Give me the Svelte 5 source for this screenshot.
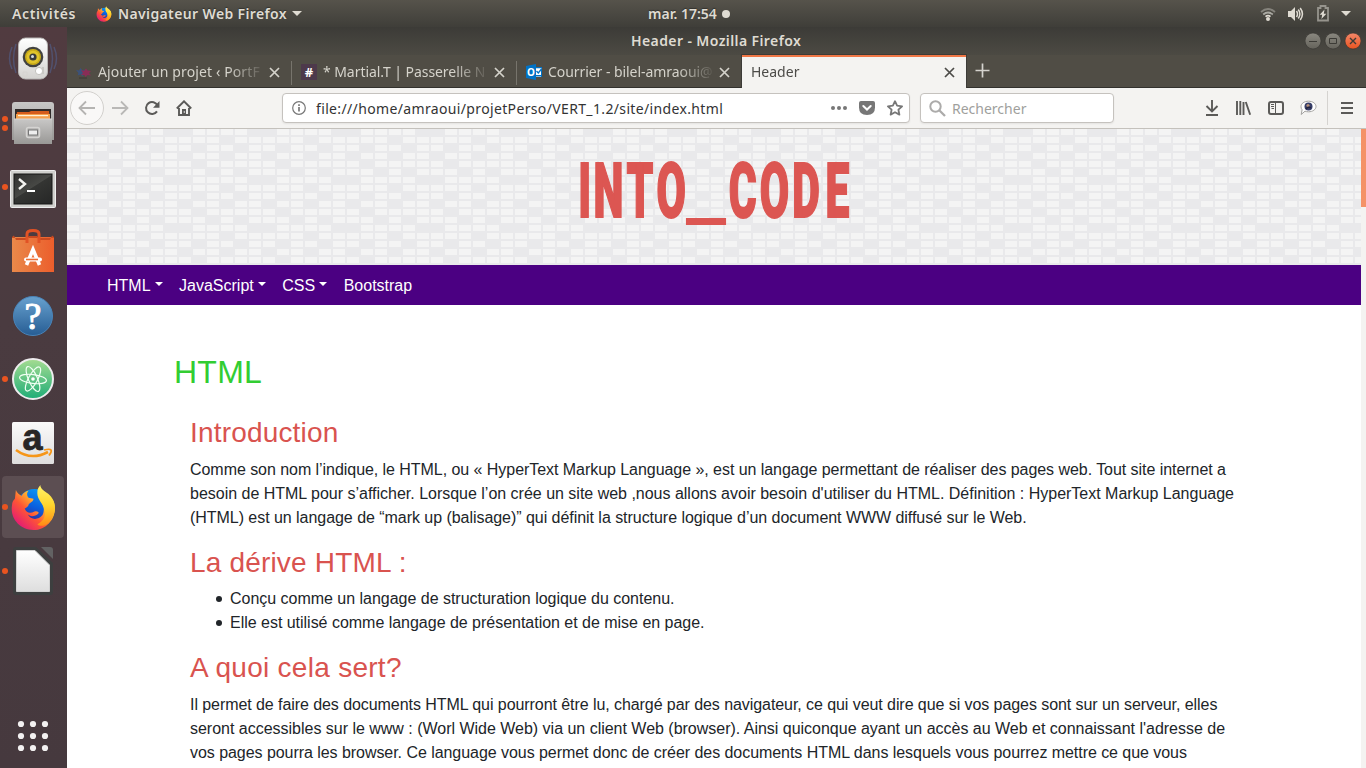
<script>
  const cols = [
    [0, 3, 4, 5],
    [0, 1, 2, 3, 4],
    [1, 2, 4, 5],
    [0, 1, 3, 4],
    [0, 1, 2, 4, 5],
    [1, 2, 3, 5]
  ];
  const bricks = cols.flatMap((row, r) => row.map((c) => ({ x: c * 14, y: r * 8 })));
  const dock = [
    { id: 'music', dots: 0 },
    { id: 'files', dots: 2 },
    { id: 'terminal', dots: 1 },
    { id: 'store', dots: 0 },
    { id: 'help', dots: 0 },
    { id: 'atom', dots: 1 },
    { id: 'amazon', dots: 0 },
    { id: 'firefox', dots: 1, active: true },
    { id: 'office', dots: 1 }
  ];
  const grid = [6, 18, 30];
  const intro = [
    { t: 'Comme son nom l’indique, le HTML, ou « HyperText Markup Language », est un langage permettant de réaliser des pages web. Tout site internet a', ls: -0.05 },
    { t: "besoin de HTML pour s’afficher. Lorsque l’on crée un site web ,nous allons avoir besoin d'utiliser du HTML. Définition : HyperText Markup Language", ls: -0.01 },
    { t: '(HTML) est un langage de “mark up (balisage)” qui définit la structure logique d’un document WWW diffusé sur le Web.', ls: -0.043 }
  ];
  const usage = [
    { t: 'Il permet de faire des documents HTML qui pourront être lu, chargé par des navigateur, ce qui veut dire que si vos pages sont sur un serveur, elles', ls: -0.068 },
    { t: "seront accessibles sur le www : (Worl Wide Web) via un client Web (browser). Ainsi quiconque ayant un accès au Web et connaissant l'adresse de", ls: -0.014 },
    { t: 'vos pages pourra les browser. Ce language vous permet donc de créer des documents HTML dans lesquels vous pourrez mettre ce que vous', ls: -0.05 }
  ];
</script>

{#snippet fox(size)}
  <svg width={size} height={size} viewBox="0 0 46 48">
    <defs>
      <linearGradient id="foxBody" x1="0.9" y1="0.1" x2="0.1" y2="0.9">
        <stop offset="0" stop-color="#fff44f" /><stop offset="0.3" stop-color="#ffbd2e" />
        <stop offset="0.6" stop-color="#ff5634" /><stop offset="1" stop-color="#e0147c" />
      </linearGradient>
      <linearGradient id="foxTail" x1="0.5" y1="0" x2="0.5" y2="1">
        <stop offset="0" stop-color="#fff36a" /><stop offset="0.5" stop-color="#ffd52c" /><stop offset="1" stop-color="#ff8a16" />
      </linearGradient>
      <linearGradient id="foxGlobe" x1="0.7" y1="0" x2="0.3" y2="1">
        <stop offset="0" stop-color="#0a9bf5" /><stop offset="0.5" stop-color="#0a60df" /><stop offset="1" stop-color="#3b1d83" />
      </linearGradient>
    </defs>
    <circle cx="24" cy="23" r="18" fill="url(#foxGlobe)" />
    <path d="M5 6 C6 9 9 11 11 12 C13 8 17 7 18 7 C16 9 16 12 18 14 L23 15 C23 18 19 19 18 21 C18 23 16 24 14 25 C16 30 20 30 24 28 C27 27 29 29 28 30 C25 33 20 34 17 31 C20 37 28 37 32 32 C35 27 33 20 31 14 C36 17 41 11 44 19 C48 32 38 47 23 47 C9 47 -1 35 1 22 C1 18 3 16 4 15 Z" fill="url(#foxBody)" />
    <path d="M30 1 C30 5 34 7 38 10 C47 17 47 31 39 39 C34 44 29 43 27 41 C34 38 36 31 34 26 C33 20 26 15 27 8 C27 4 29 3 30 1Z" fill="url(#foxTail)" />
  </svg>
{/snippet}

{#snippet cross()}
  <svg class="cross" width="11" height="11" viewBox="0 0 11 11"><path d="M1 1L10 10M10 1L1 10" fill="none" stroke="currentColor" stroke-width="1.7" /></svg>
{/snippet}

{#snippet caret()}
  <svg class="caret" width="8" height="4" viewBox="0 0 8 4"><path d="M0 0h8L4 4z" fill="#fff" /></svg>
{/snippet}

<div class="screen">
  <header class="topbar">
    <span class="activities">Activités</span>
    <span class="foxmini">{@render fox(16)}</span>
    <span class="appname">Navigateur Web Firefox</span>
    <i class="down"></i>
    <span class="clock">mar. 17:54<i></i></span>
    <div class="status">
      <svg width="16" height="16" viewBox="0 0 16 16"><g fill="none" stroke-width="1.8"><path d="M1 6Q8 0 15 6" stroke="#85837c" /><path d="M3.2 8.5Q8 4.5 12.8 8.5" stroke="#aaa9a2" /><path d="M5.5 10.6Q8 8.7 10.5 10.6" stroke="#dfdbd2" /></g><circle cx="8" cy="13" r="2" fill="#dfdbd2" /></svg>
      <svg class="vol" width="17" height="16" viewBox="0 0 17 16"><path d="M1 5h3l4-4v14l-4-4H1z" fill="#dfdbd2" /><g fill="none" stroke="#dfdbd2" stroke-width="1.5"><path d="M9.5 5q2 3 0 6M11.3 3.5q3.2 4.5 0 9M13.2 2q4.500 6 0 12" /></g></svg>
      <svg width="12" height="17" viewBox="0 0 12 17"><path d="M1 3h2.5V1h5v2H11v12.5H1z" fill="none" stroke="#96948d" stroke-width="1.8" /><path d="M7.5 4.5L2.7 9.7h2.5L4.4 14l5-5.3H6.800z" fill="#dfdbd2" /></svg>
      <i class="down"></i>
    </div>
  </header>

  <div class="desktop">
    <aside>
      {#each dock as app}
        <div class="app" class:active={app.active}>
          <div class="dots">{#each Array(app.dots) as _}<i></i>{/each}</div>
          {#if app.id === 'music'}
            <svg width="50" height="48" viewBox="0 0 50 48">
              <defs><linearGradient id="spk" x2="0" y2="1"><stop stop-color="#fff" /><stop offset="1" stop-color="#d4d3d0" /></linearGradient></defs>
              <g fill="none" stroke="#52618d" stroke-width="1.5" opacity=".6"><path d="M8 9Q3 24 8 38M4 12Q-1 24 4 34M42 9Q47 24 42 38M46 12Q51 24 46 34" /></g>
              <rect x="10.500" y="3" width="29" height="41" rx="7" fill="url(#spk)" stroke="#b7b5b3" />
              <circle cx="25" cy="22" r="10.3" fill="#42423f" /><circle cx="25" cy="22" r="8" fill="#cbad19" /><circle cx="25" cy="22" r="6.3" fill="#e1c42c" /><circle cx="25" cy="22" r="3.6" fill="#39393b" /><circle cx="24.5" cy="21.5" r="1.5" fill="#d5dce2" />
              <circle cx="31" cy="36" r="3.6" fill="#fff" stroke="#c4c3bf" /><rect x="34" y="32" width="2" height="7" fill="#c9c8c4" /><path d="M15 37h4v4h-4z" fill="none" stroke="#d6d4d0" />
            </svg>
          {:else if app.id === 'files'}
            <svg width="44" height="44" viewBox="0 0 44 44">
              <defs><linearGradient id="cab" x2="0" y2="1"><stop stop-color="#c8c7c6" /><stop offset="1" stop-color="#999896" /></linearGradient></defs>
              <path d="M1 4q0-3 3-3h36q3 0 3 3v35H1z" fill="url(#cab)" /><path d="M4 8h36v12H4z" fill="#302b2a" />
              <path d="M6 11h12l2-1h18l1 9H5z" fill="#d55c1c" /><path d="M5 13h34v5H5z" fill="#f5a04c" /><path d="M7 14h30v1.2H7z" fill="#fff0d5" />
              <path d="M3 18h38v25H3z" fill="url(#cab)" /><path d="M3 18h38" stroke="#dad8d7" /><rect x="15.5" y="26.500" width="13" height="10" rx="2" fill="#b3b2b0" stroke="#d5d4d2" stroke-width="1.5" /><rect x="17.5" y="29" width="9" height="5" fill="#eee" stroke="#777" />
            </svg>
          {:else if app.id === 'terminal'}
            <svg class="term" width="46" height="39" viewBox="0 0 46 39">
              <defs><linearGradient id="trm" x2=".8" y2="1"><stop stop-color="#30302f" /><stop offset=".5" stop-color="#474845" /><stop offset=".52" stop-color="#343533" /><stop offset="1" stop-color="#282928" /></linearGradient></defs>
              <rect x=".5" y=".5" width="45" height="37" rx="1" fill="#d0d0cd" stroke="#eee" /><rect x="4" y="4" width="38" height="30" fill="url(#trm)" stroke="#161716" /><path d="M9 9l6 5-6 5" fill="none" stroke="#f4f4f1" stroke-width="2.4" /><path d="M17 21h8" stroke="#fff" stroke-width="2" />
            </svg>
          {:else if app.id === 'store'}
            <svg width="44" height="44" viewBox="0 0 44 44">
              <defs><linearGradient id="bag"><stop stop-color="#e9894a" /><stop offset="1" stop-color="#ec5e2c" /></linearGradient></defs>
              <path d="M1 8h42v35H1z" fill="url(#bag)" /><path d="M1 8l2-1.500 2 4.500h11l2-4h8l2 4h11l2-4.500L43 8v1H1z" fill="#c94a20" /><path d="M16 14V5q0-3.500 6-3.500T28 5v9" fill="none" stroke="#e15225" stroke-width="3" /><path d="M15.500 36L22 20.500 28.500 36" fill="none" stroke="#fff" stroke-width="3.600" /><rect x="13" y="28.500" width="18" height="4" rx="2" fill="#fff" /><path d="M15 30.500h12" stroke="#ed6e35" stroke-width="1.600" />
            </svg>
          {:else if app.id === 'help'}
            <svg class="help" width="42" height="42" viewBox="0 0 42 42"><defs><linearGradient id="hlp" x2="0" y2="1"><stop stop-color="#67a1cf" /><stop offset="1" stop-color="#275d94" /></linearGradient></defs><circle cx="21" cy="21" r="19.5" fill="url(#hlp)" stroke="#4984b9" /><text x="21" y="33.500" text-anchor="middle" font-family="Liberation Serif, serif" font-size="38" fill="#fff" stroke="#fff" stroke-width="1">?</text></svg>
          {:else if app.id === 'atom'}
            <svg width="44" height="44" viewBox="0 0 44 44"><defs><linearGradient id="atm" x2="0" y2="1"><stop stop-color="#a5dc91" /><stop offset="1" stop-color="#1fad77" /></linearGradient></defs><circle cx="22" cy="22" r="20" fill="url(#atm)" stroke="#eeecee" stroke-width="2" /><g fill="none" stroke="#f0fff3" stroke-width="1.2"><ellipse cx="22" cy="22" rx="13.5" ry="4.500" transform="rotate(7 22 22)" /><ellipse cx="22" cy="22" rx="13.500" ry="4.500" transform="rotate(66 22 22)" /><ellipse cx="22" cy="22" rx="13.500" ry="4.500" transform="rotate(119 22 22)" /></g><circle cx="22" cy="22" r="1.800" fill="#fff" /></svg>
          {:else if app.id === 'amazon'}
            <svg width="42" height="42" viewBox="0 0 42 42"><defs><linearGradient id="amz" x2="0" y2="1"><stop stop-color="#fafafa" /><stop offset="1" stop-color="#dedddd" /></linearGradient></defs><rect width="42" height="42" rx="1.5" fill="url(#amz)" /><text x="20.500" y="27.500" text-anchor="middle" font-family="Liberation Sans, sans-serif" font-weight="bold" font-size="36" fill="#282626" stroke="#282626" stroke-width=".8">a</text><path d="M4 28q15 11 32 2" fill="none" stroke="#f69618" stroke-width="2.6" /><path d="M32 28q6-1.500 7 0t-2 5.500" fill="none" stroke="#f69618" stroke-width="1.800" /></svg>
          {:else if app.id === 'firefox'}
            {@render fox(47)}
          {:else}
            <svg width="40" height="48" viewBox="0 0 40 48"><defs><linearGradient id="doc" x2="0" y2="1"><stop stop-color="#fff" /><stop offset="1" stop-color="#dedede" /></linearGradient></defs><path d="M3 0h20l17 16v29q0 3-3 3H3q-3 0-3-3V3q0-3 3-3z" fill="#3d3f3f" /><path d="M3.500 3.500h18.500L36.500 18v26.500h-33z" fill="url(#doc)" stroke="#d2d2d2" /><path d="M28 0h9q3 0 3 3v9z" fill="#626263" /></svg>
          {/if}
        </div>
      {/each}
      <svg class="launcher" width="36" height="36" viewBox="0 0 36 36">
        {#each grid as y}{#each grid as x}<circle cx={x} cy={y} r="3.1" fill="#f3f1f1" />{/each}{/each}
      </svg>
    </aside>

    <main>
      <div class="titlebar">
        <span>Header - Mozilla Firefox</span>
        <div class="winbtns">
          <svg width="56" height="18" viewBox="0 0 56 18">
            <defs><linearGradient id="wb" x2="0" y2="1"><stop stop-color="#8a8880" /><stop offset="1" stop-color="#65635b" /></linearGradient><linearGradient id="wc" x2="0" y2="1"><stop stop-color="#f4886a" /><stop offset="1" stop-color="#e95420" /></linearGradient></defs>
            <circle cx="8" cy="9" r="8" fill="url(#wb)" stroke="#34332f" stroke-width=".6" /><circle cx="28" cy="9" r="8" fill="url(#wb)" stroke="#34332f" stroke-width=".6" /><circle cx="48" cy="9" r="8" fill="url(#wc)" stroke="#34332f" stroke-width=".6" />
            <g fill="none" stroke="#3c3b36"><path d="M4 9.500h8M24.500 6.500h7v5h-7z" /><path d="M45 6l6 6M51 6l-6 6" stroke-width="1.400" /></g>
          </svg>
        </div>
      </div>

      <div class="tabs">
        <div class="tab">
          <svg width="16" height="16" viewBox="0 0 16 16"><path d="M0 6l3 .5L4.500 4l2 2.500 3-1-1 3 3 1-4 1-1 2-2-2-3 1 1-2.500z" fill="#3b527b" /><path d="M5 6l3 1 2-2.500 1.500 2 3.500.5-2 2 2 2.500-3.500-.5-2 2-1-2-3.500 0 2-2z" fill="#892d56" /><path d="M3 14h8" stroke="#3b3934" /></svg>
          <span class="label one">Ajouter un projet ‹ PortF</span>{@render cross()}
        </div>
        <div class="tab">
          <svg width="16" height="16" viewBox="0 0 16 16"><rect width="16" height="16" fill="#4d394b" /><text x="8" y="13" text-anchor="middle" font-family="Noto Sans, sans-serif" font-weight="bold" font-size="13" fill="#fff">#</text></svg>
          <span class="label two">* Martial.T | Passerelle N</span>{@render cross()}
        </div>
        <div class="tab last">
          <svg width="16" height="16" viewBox="0 0 16 16"><path d="M7 3h9v10H7z" fill="#fff" /><path d="M9 12.500h7V11H9zM15 4v9h1V4zM9 3h7v1.200H9z" fill="#0072c6" /><path d="M10.500 7l1.800 2 3.200-4" fill="none" stroke="#0072c6" stroke-width="1.300" /><path d="M0 2l10-2v16L0 14z" fill="#0072c6" /><text x="5" y="12" text-anchor="middle" font-family="Noto Sans, sans-serif" font-weight="bold" font-size="10" fill="#fff">O</text></svg>
          <span class="label three">Courrier - bilel-amraoui@</span>{@render cross()}
        </div>
        <div class="tab current"><span class="label four">Header</span>{@render cross()}</div>
        <svg class="plus" width="15" height="15" viewBox="0 0 15 15"><path d="M7.500 .5v14M.5 7.500h14" stroke="#d5d3ce" stroke-width="1.700" /></svg>
      </div>

      <div class="toolbar">
        <div class="back"><svg width="18" height="16" viewBox="0 0 18 16"><path d="M17 8H2M8 1.500L1.500 8 8 14.500" fill="none" stroke="#b5b4b2" stroke-width="1.800" /></svg></div>
        <svg class="fwd" width="18" height="16" viewBox="0 0 18 16"><path d="M1 8h15M10 1.500L16.500 8 10 14.500" fill="none" stroke="#b9b8b6" stroke-width="1.800" /></svg>
        <svg class="reload" width="16" height="16" viewBox="0 0 16 16"><path d="M13 11.400A6 6 0 1 1 13.500 5.500" fill="none" stroke="#5b5a58" stroke-width="2" /><path d="M15.500 1v6.700H9z" fill="#5b5a58" /></svg>
        <svg class="home" width="16" height="16" viewBox="0 0 16 16"><path d="M.8 8.500L8 1.300l7.200 7.200M3 8v7h10V8" fill="none" stroke="#5b5a58" stroke-width="1.900" /><path d="M6 15V9h4v6z" fill="#5b5a58" /><circle cx="8.300" cy="12" r=".7" fill="#fff" /></svg>
        <div class="urlbar">
          <svg width="14" height="14" viewBox="0 0 14 14"><circle cx="7" cy="7" r="6.300" fill="none" stroke="#777" stroke-width="1.200" /><path d="M7 6v4.500M7 3.200v1.700" stroke="#777" stroke-width="1.700" /></svg>
          <span class="url">file:///home/amraoui/projetPerso/VERT_1.2/site/index.html</span>
          <svg class="urlicons" width="74" height="18" viewBox="0 0 74 18"><g fill="#777"><circle cx="3" cy="9" r="2" /><circle cx="9" cy="9" r="2" /><circle cx="15" cy="9" r="2" /><path d="M31 2h12q2 0 2 2v4.500q0 7.500-8 7.500t-8-7.500V4q0-2 2-2z" /></g><path d="M33.300 7l3.700 3.500L40.700 7" fill="none" stroke="#fff" stroke-width="2" stroke-linecap="round" /><path d="M65 2.200l2.100 4.500 5 .6-3.700 3.400 1 4.900-4.400-2.400-4.400 2.400 1-4.900-3.700-3.400 5-.6z" fill="none" stroke="#777" stroke-width="1.800" stroke-linejoin="round" /></svg>
        </div>
        <div class="search">
          <svg width="17" height="17" viewBox="0 0 17 17"><circle cx="6.500" cy="6.500" r="5.200" fill="none" stroke="#acabaa" stroke-width="2" /><path d="M10.500 10.500l5.500 5.500" stroke="#acabaa" stroke-width="2.300" /></svg>
          <span>Rechercher</span>
        </div>
        <div class="tools">
          <svg width="14" height="18" viewBox="0 0 14 18"><path d="M7 1v11M1.500 7L7 12.500 12.500 7M1 16h12" fill="none" stroke="#5b5a58" stroke-width="1.900" /></svg>
          <svg width="16" height="16" viewBox="0 0 16 16"><path d="M2 1v14M5.300 1v14M8.500 2v13M10.800 2l4.400 12.800" fill="none" stroke="#5b5a58" stroke-width="1.900" /></svg>
          <svg class="side" width="16" height="14" viewBox="0 0 16 14"><rect x="1" y="1" width="14" height="12" rx="2" fill="none" stroke="#5b5a58" stroke-width="2" /><path d="M7.500 1v12" stroke="#5b5a58" /><path d="M3 3.500h3M3 5.500h3M3.500 7.500H6" stroke="#5b5a58" /></svg>
          <svg width="17" height="16" viewBox="0 0 17 16"><path d="M8.500 1.200c4.200 0 7.500 2.300 7.500 5.300s-3.300 5.300-7.500 5.300c-1.300 0-2.500-.2-3.500-.6L1.200 14.500l.9-4.700C1.300 9 1 7.700 1 6.500c0-3 3.300-5.300 7.500-5.300z" fill="#fff" stroke="#a3a2a0" /><circle cx="8.500" cy="6.500" r="4" fill="#383f69" /><circle cx="8" cy="5.500" r="1.600" fill="#b89179" /><path d="M6 9q2-3 5-1" fill="none" stroke="#24243e" stroke-width="1.500" /></svg>
          <i class="bar"></i>
          <svg width="12" height="14" viewBox="0 0 12 14"><path d="M0 2h12M0 7h12M0 12h12" stroke="#5b5a58" stroke-width="1.900" /></svg>
        </div>
      </div>

      <div class="viewport">
        <div class="page">
          <div class="banner">
            <svg width="1294" height="136">
              <defs><pattern id="bricks" width="84" height="48" patternUnits="userSpaceOnUse"><rect width="84" height="48" fill="#e9e9eb" />{#each bricks as b}<rect x={b.x} y={b.y} width="12" height="6" fill="#f4f4f4" />{/each}</pattern></defs>
              <rect width="1294" height="136" fill="url(#bricks)" />
              <g font-family="Roboto, sans-serif" font-weight="900" fill="#dc5652" stroke="#dc5652">
                <text transform="translate(511.300 87.500) scale(.56 1)" font-size="76" stroke-width="1.800" x="0 27 86 139.500">INTO</text>
                <text transform="translate(619 88.500) scale(1.180 .75)" font-size="77" stroke-width="0" x="0">_</text>
                <text transform="translate(511.300 87.500) scale(.56 1)" font-size="76" stroke-width="1.800" x="268.500 324 382 441.500">CODE</text>
              </g>
            </svg>
          </div>
          <nav>
            <span>HTML{@render caret()}</span><span>JavaScript{@render caret()}</span><span>CSS{@render caret()}</span><span>Bootstrap</span>
          </nav>
          <article>
            <h1>HTML</h1>
            <section>
              <h2>Introduction</h2>
              <p>{#each intro as line}<span class="line" style:letter-spacing="{line.ls}px">{line.t}</span>{/each}</p>
              <h2>La dérive HTML :</h2>
              <ul>
                <li>Conçu comme un langage de structuration logique du contenu.</li>
                <li>Elle est utilisé comme langage de présentation et de mise en page.</li>
              </ul>
              <h2 class="wide">A quoi cela sert?</h2>
              <p>{#each usage as line}<span class="line" style:letter-spacing="{line.ls}px">{line.t}</span>{/each}</p>
            </section>
          </article>
        </div>
        <div class="scroll"><i></i></div>
      </div>
    </main>
  </div>
</div>

<style>
  :global(body) { margin: 0; overflow: hidden; }
  .screen, .screen * { box-sizing: border-box; }
  .screen { width: 1366px; height: 768px; overflow: hidden; display: flex; flex-direction: column; font-family: "Noto Sans", sans-serif; font-size: 14px; white-space: nowrap; }
  svg { display: block; flex: none; }
  .topbar { position: relative; height: 27px; flex: none; display: flex; align-items: center; padding: 0 15px 0 12px; color: #dfdbd2; font-weight: 600; font-size: 14px; background: linear-gradient(#56534b, #3f3e39); text-shadow: 0 -1px 1px #33322e; }
  .activities { width: 84px; letter-spacing: .62px; }
  .foxmini { width: 22px; }
  .appname { width: 169px; letter-spacing: .37px; }
  .down { width: 0; border: 5px solid transparent; border-top-color: #dfdbd2; border-bottom: 0; margin-left: 5px; }
  .clock { margin-left: 346px; display: flex; align-items: center; gap: 5px; }
  .clock i { width: 8px; height: 8px; border-radius: 50%; background: #dfdbd2; }
  .status { margin-left: auto; display: flex; align-items: center; gap: 12px; }
  .vol { margin: 0 1px 0 -1px; }
  .status .down { margin-left: 0; }
  .desktop { flex: 1; display: flex; min-height: 0; }
  aside { width: 67px; flex: none; padding-right: 1px; background: linear-gradient(#513b40, #4a3b40 40%, #46393e); display: flex; flex-direction: column; align-items: center; }
  .app { position: relative; width: 62px; height: 62px; margin: 1px 0; border-radius: 4px; display: flex; align-items: center; justify-content: center; }
  .app.active { background: #5c4e52; }
  .term { margin-top: 5px; }
  .help { margin-top: 2px; }
  .dots { position: absolute; left: 0; top: 0; height: 62px; display: flex; flex-direction: column; gap: 3px; justify-content: center; }
  .dots i { width: 6px; height: 6px; border-radius: 50%; background: #e95420; }
  .launcher { margin: auto 0 14px; }
  main { flex: 1; min-width: 0; display: flex; flex-direction: column; }
  .titlebar { height: 28px; flex: none; background: linear-gradient(#3c3b37, #4c4a43); display: flex; align-items: center; color: #dfdbd2; font-weight: 600; }
  .titlebar span { padding-left: 564px; width: 1238px; letter-spacing: .4px; padding-bottom: 1px; }
  .winbtns { width: 56px; }
  .tabs { height: 33px; flex: none; display: flex; background: #504d45; color: #d5d3cb; box-shadow: inset 0 -1px #32312d; }
  .tab { width: 225px; padding: 1px 12px 0 9px; display: flex; align-items: center; position: relative; background: linear-gradient(#77746c, #77746c) right 0 top 6px / 1px 24px no-repeat; }
  .tab.last { background: none; width: 224px; padding-right: 11px; }
  .label { width: 166px; margin-left: 6px; padding-bottom: 2px; overflow: hidden; -webkit-mask-image: linear-gradient(90deg, #000 78%, transparent 101%); mask-image: linear-gradient(90deg, #000 78%, transparent 101%); }
  .one { letter-spacing: .12px; }
  .two { letter-spacing: -.06px; }
  .three { letter-spacing: -.06px; }
  .cross { margin-left: auto; }
  .tab.current { background: #f4f3f1; border-top: 2px solid #f07746; color: #4c4b48; padding-top: 0; box-shadow: 0 0 0 1px #3c3b37; clip-path: inset(-1px -1px 0 -1px); margin-left: 1px; width: 224px; padding-right: 11px; padding-bottom: 1px; }
  .current .label { margin-left: 0; }
  .plus { margin: 8px 0 0 9px; }
  .toolbar { height: 41px; flex: none; display: flex; align-items: center; background: #f4f3f1; border-bottom: 1px solid #c4c1bc; color: #333; }
  .back { width: 34px; height: 34px; margin-left: 3px; border: 1px solid #d2d0cd; border-radius: 50%; display: grid; place-items: center; background: #f9f8f7; }
  .fwd { margin-left: 7px; }
  .reload { margin-left: 15px; }
  .home { margin-left: 16px; }
  .urlbar, .search { height: 30px; background: #fff; border: 1px solid #c5c2be; border-radius: 4px; display: flex; align-items: center; box-shadow: 0 1px 2px #0001; }
  .urlbar { width: 628px; margin-left: 90px; padding: 0 5px 0 9px; }
  .url { margin-left: 10px; letter-spacing: .355px; }
  .urlicons { margin-left: auto; }
  .search { width: 194px; margin-left: 10px; padding-left: 8px; color: #a09f9d; }
  .search span { margin-left: 6px; }
  .tools { margin-left: 91px; display: flex; align-items: center; gap: 16px; }
  .side { margin: 0 0 0 1px; }
  .tools .bar { width: 1px; height: 34px; background: #d5d3d0; margin-left: -6px; margin-right: -3px; }
  .viewport { flex: 1; min-height: 0; display: flex; background: #fff; }
  .page { width: 1294px; overflow: hidden; font: 16px/24px "Liberation Sans", Arial, sans-serif; color: #212529; }
  .scroll { width: 5px; background: #f4f3f1; }
  .scroll i { display: block; height: 78px; background: #f49267; }
  .banner { height: 136px; }
  nav { height: 40px; background: #4b0082; color: #fff; display: flex; align-items: center; gap: 16.500px; padding: 2px 0 0 40px; }
  nav span { display: flex; align-items: center; }
  .caret { margin: -4px 0 0 4px; }
  article { padding: 48px 0 0 107px; }
  h1, h2 { font-weight: 400; line-height: 1.2; margin: 0 0 8px; }
  h1 { font-size: 32px; color: #32cd32; margin-bottom: 24.600px; letter-spacing: .25px; }
  h2 { font-size: 28px; color: #d9534f; letter-spacing: .18px; }
  h2.wide { letter-spacing: .28px; }
  section { padding-left: 16px; }
  p { margin: 0 0 16px; }
  .line { display: block; }
  ul { margin: 0 0 16px; padding-left: 40px; list-style: none; }
  li { position: relative; letter-spacing: -.02px; }
  li::before { content: ""; position: absolute; left: -14px; top: 9px; width: 6px; height: 6px; border-radius: 50%; background: #212529; }
</style>
